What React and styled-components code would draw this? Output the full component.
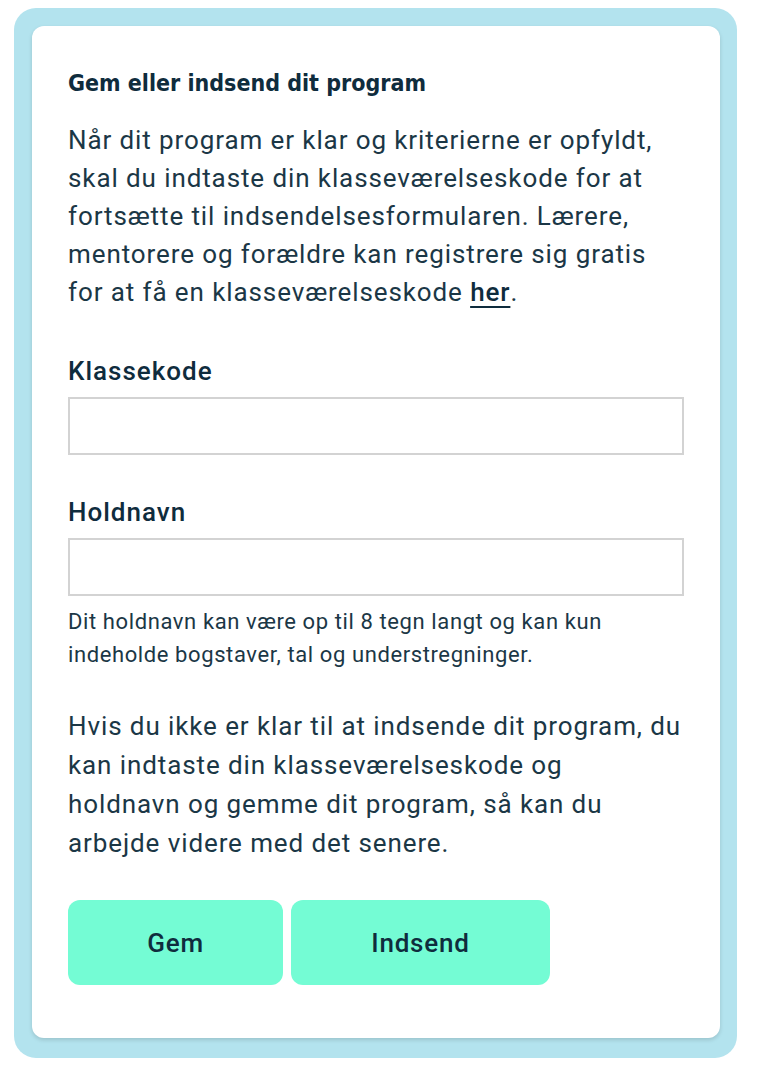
import React from 'react';
import styled, { createGlobalStyle } from 'styled-components';

const GlobalStyle = createGlobalStyle`
  body {
    margin: 0;
    background: #fff;
    font-family: Roboto, "Noto Sans", sans-serif;
  }
`;

const Frame = styled.div`
  width: 723px;
  margin: 8px 0 10px 14px;
  padding: 18px 17px 20px 18px;
  box-sizing: border-box;
  background: #b3e3ee;
  border-radius: 22px;
`;

const Card = styled.section`
  background: #fff;
  border-radius: 12px;
  box-shadow: 0 2px 4px rgba(0, 0, 0, 0.14);
  padding: 42px 36px 53px;
  color: #10303f;
`;

const Title = styled.h2`
  margin: 0 0 23px;
  font-family: "DejaVu Sans Condensed", "Liberation Sans Narrow", sans-serif;
  font-weight: 700;
  font-size: 23px;
  line-height: 30px;
  color: #0f2c3d;
`;

const Text = styled.p`
  margin: ${({ $top }) => $top || 0}px 0 0;
  font-size: 26px;
  line-height: ${({ $lh }) => $lh || 38}px;
  letter-spacing: 0.9px;
  color: #1b3746;

  a {
    color: #0f2c3d;
    font-weight: 500;
    text-decoration: underline;
    text-decoration-thickness: 2px;
    text-underline-offset: 5px;
  }
`;

const Field = styled.div`
  display: flex;
  flex-direction: column;
  gap: 10px;
  margin-top: ${({ $top }) => $top}px;
`;

const Label = styled.label`
  font-size: 26px;
  font-weight: 500;
  line-height: 32px;
  letter-spacing: 1px;
  color: #0f2c3d;
`;

const Input = styled.input`
  height: 58px;
  box-sizing: border-box;
  border: 2px solid #d3d3d3;
  border-radius: 0;
  padding: 0 12px;
  font: inherit;
  font-size: 22px;
`;

const Hint = styled.p`
  margin: 9px 0 0;
  font-size: 22px;
  line-height: 33px;
  letter-spacing: 0.6px;
  color: #1b3746;
`;

const Actions = styled.div`
  display: flex;
  gap: 8px;
  margin-top: 37px;
`;

const Button = styled.button`
  height: 85px;
  width: ${({ $w }) => $w}px;
  border: 0;
  border-radius: 12px;
  background: #74fcd4;
  color: #0f2c3d;
  font-family: Roboto, sans-serif;
  font-size: 26px;
  font-weight: 500;
  letter-spacing: 0.8px;
  cursor: pointer;
`;

export default function App() {
  return (
    <>
      <GlobalStyle />
      <Frame>
        <Card>
          <Title>Gem eller indsend dit program</Title>
          <Text>
            Når dit program er klar og kriterierne er opfyldt, skal du indtaste din
            klasseværelseskode for at fortsætte til indsendelsesformularen. Lærere,
            mentorere og forældre kan registrere sig gratis for at få en
            klasseværelseskode <a href="#">her</a>.
          </Text>
          <Field $top={44}>
            <Label htmlFor="code">Klassekode</Label>
            <Input id="code" type="text" />
          </Field>
          <Field $top={41}>
            <Label htmlFor="team">Holdnavn</Label>
            <Input id="team" type="text" />
          </Field>
          <Hint>
            Dit holdnavn kan være op til 8 tegn langt og kan kun indeholde bogstaver,
            tal og understregninger.
          </Hint>
          <Text $top={36} $lh={39}>
            Hvis du ikke er klar til at indsende dit program, du kan indtaste din
            klasseværelseskode og
            <br />
            holdnavn og gemme dit program, så kan du
            <br />
            arbejde videre med det senere.
          </Text>
          <Actions>
            <Button $w={215}>Gem</Button>
            <Button $w={259}>Indsend</Button>
          </Actions>
        </Card>
      </Frame>
    </>
  );
}
